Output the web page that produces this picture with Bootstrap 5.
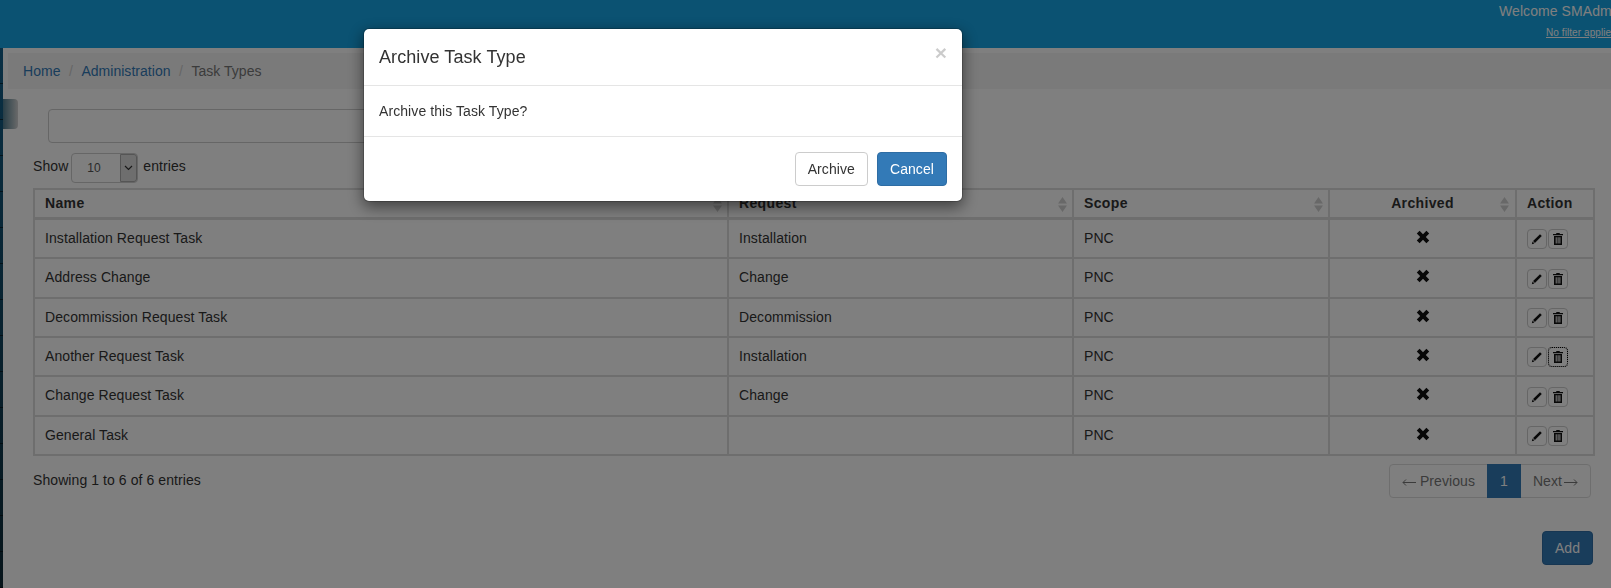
<!DOCTYPE html>
<html lang="en">
<head>
<meta charset="utf-8">
<title>Task Types</title>
<link rel="stylesheet" href="https://cdn.jsdelivr.net/npm/bootstrap@5.3.0/dist/css/bootstrap.min.css">
<style>
html,body{height:100%;overflow:hidden}
body{font-family:"Liberation Sans",Arial,sans-serif;font-size:14px;line-height:20px;color:#333;background:#fff;letter-spacing:.08px}
a{color:#337ab7;text-decoration:none}
.topbar{height:48px;background:#16a4e4;color:#fff;text-align:right;white-space:nowrap;overflow:hidden;padding-right:0}
.topinner{width:112px;margin-left:auto;text-align:left}
.welcome{font-size:14px;line-height:20px;padding-top:1px}
.filterlink{font-size:10px;color:#fff;text-decoration:underline;line-height:14px;display:block;margin-top:5px;margin-left:47px}
.shell{display:flex;height:540px}
.siderail{width:3px;flex:none;background:repeating-linear-gradient(to bottom,transparent 0 35px,rgba(0,0,0,.55) 35px 36px),linear-gradient(to bottom,#14608a,#0e2a36);position:relative}
.sidetab{position:absolute;left:3px;top:51px;width:15px;height:30px;border-radius:0 4px 4px 0;background:linear-gradient(to right,#507c8e,#d4d4d4)}
.pagewrap{flex:1;min-width:0;padding:5px 16px 0 5px}
.crumbs{margin:0 -16px 0 0;background:#f5f5f5;height:36px;padding:8px 15px;border-radius:0;letter-spacing:.03px}
.crumbs .breadcrumb-item+.breadcrumb-item::before{content:"/";color:#ccc;padding-right:8.5px}
.crumbs .breadcrumb-item+.breadcrumb-item{padding-left:8.5px}
.crumbs .breadcrumb-item.active{color:#777}
.searchbox{display:block;margin:20px 0 0 40px;width:560px;height:34px;border:1px solid #ccc;border-radius:4px;background:#fff}
.lenrow{display:flex;align-items:center;margin:10px 0 0 25px;height:30px}
.lenrow>span{padding-bottom:4px}
.lenselect{width:67px;height:30px;margin:0 5px 0 3px;border:1px solid #ccc;border-radius:4px;position:relative;font-size:12px;line-height:20px;padding:4px 0 0 15px;color:#555;background:#fff}
.lenarrow{position:absolute;top:0;right:0;width:17px;height:28px;background:#ddd;border:1px solid #aaa;border-radius:0 3px 3px 0;display:flex;align-items:center;justify-content:center}
.tasktbl{margin:5px 0 0 25px;width:1560px;table-layout:fixed;border-collapse:collapse;border:2px solid #ddd;color:#333}
.tasktbl th,.tasktbl td{border:2px solid #ddd;padding:0 10px;vertical-align:middle;background:#fff}
.tasktbl td{padding-bottom:2px}
.tasktbl tbody tr:first-child td{padding-bottom:1px}
.tasktbl td:last-child,.tasktbl tbody tr:first-child td:last-child{padding-bottom:0}
.tasktbl thead th{border-bottom-width:3px;height:29px;position:relative;letter-spacing:.35px}
.tasktbl tbody tr{height:39px}
.tasktbl tbody tr.rowtall{height:40px}
.sorter{position:absolute;right:5px;top:7px;width:9px;height:15px}
.cenx{text-align:center}
.cenx .sorter{right:6px}
.xmark{display:block;margin:0 auto 2px}
.iconbtn{display:inline-flex;align-items:center;justify-content:center;width:20px;height:20px;border:1px solid #ccc;border-radius:4px;background:#fff;padding:0;vertical-align:middle;margin-right:1px}
.focused{outline:1px dotted #000;outline-offset:-1px}
.infoline{display:flex;justify-content:space-between;margin:8px -1px 0 25px;width:1558px}
.infotext{padding-top:6px}
.pager{margin:0;--bs-pagination-color:#777;--bs-pagination-border-color:#ddd;--bs-pagination-padding-x:12px;--bs-pagination-padding-y:6px;--bs-pagination-font-size:14px;--bs-pagination-border-radius:4px;--bs-pagination-active-bg:#337ab7;--bs-pagination-active-border-color:#337ab7;--bs-pagination-disabled-color:#777;--bs-pagination-disabled-border-color:#ddd;--bs-pagination-disabled-bg:#fff}
.pagearrow{vertical-align:-1px}
.arrowafter{margin-left:2px}
.addrow{display:flex;justify-content:flex-end;margin-top:33px;width:1585px}
.addbtn{width:51px;height:34px;background:#337ab7;border:1px solid #2e6da4;color:#fff;font-size:14px;padding:0;border-radius:4px}
.dialogbox{width:600px;max-width:none;margin:28px 0 0 363px}
.dialogbox .modal-content{border:1px solid rgba(0,0,0,.2);border-radius:6px;box-shadow:0 5px 15px rgba(0,0,0,.5)}
.dialogbox .modal-header{padding:15px;border-bottom:1px solid #e5e5e5;height:57px;align-items:flex-start;justify-content:space-between}
.dialogbox .modal-title{font-size:18px;line-height:26px;font-weight:500;color:#333}
.xclose{font-size:21px;font-weight:700;line-height:21px;color:#000;opacity:.2;background:none;border:0;padding:0;margin-top:-2px}
.dialogbox .modal-body{padding:15px;height:50px}
.dialogbox .modal-footer{padding:15px;border-top:1px solid #e5e5e5;gap:9px;height:65px}
.dialogbox .modal-footer .btn{margin:0;height:34px;font-size:14px;line-height:20px;padding:6px 12px;border-radius:4px;letter-spacing:.08px}
.btn-archive{background:#fff;border:1px solid #ccc;color:#333}
.btn-cancel{background:#337ab7;border:1px solid #2e6da4;color:#fff}
.modal-backdrop.show{opacity:.5}
</style>
</head>
<body>
<svg width="0" height="0" class="d-none">
<symbol id="ipen" viewBox="0 0 12 12"><path d="M9 1.200l1.800 1.800-6.900 6.900-1.800-1.800zM1.600 8.600l1.800 1.800-2.600.8z" fill="#111"/></symbol>
<symbol id="itrash" viewBox="0 0 12 12"><path d="M4.500 0h3l.5 1h3v1.300H1V1h3zM2 3h8v9H2zM3.700 4.300v6.300h1V4.300zm1.900 0v6.300h1V4.300zm1.800 0v6.300h1V4.300z" fill="#111" fill-rule="evenodd"/></symbol>
<symbol id="ix" viewBox="0 0 14 14"><path d="M3.600 .8L7 4.200 10.400 .8 13.200 3.600 9.800 7l3.400 3.400-2.800 2.800L7 9.800l-3.400 3.400L.8 10.400 4.200 7 .8 3.600z" fill="#111"/></symbol>
<symbol id="isort" viewBox="0 0 9 15"><path d="M4.500 0L9 6.500H0zM4.500 15L0 8.500h9z" fill="#d0d0d0"/></symbol>
</svg>

<header class="topbar">
  <div class="topinner">
    <div class="welcome">Welcome SMAdmin</div>
    <a class="filterlink" href="#">No filter applied</a>
  </div>
</header>

<div class="shell">
  <div class="siderail"><div class="sidetab"></div></div>
  <main class="pagewrap">
    <nav aria-label="breadcrumb">
      <ol class="breadcrumb crumbs">
        <li class="breadcrumb-item"><a href="#">Home</a></li>
        <li class="breadcrumb-item"><a href="#">Administration</a></li>
        <li class="breadcrumb-item active">Task Types</li>
      </ol>
    </nav>
    <div class="searchbox"></div>
    <div class="lenrow">
      <span>Show</span>
      <div class="lenselect">10<span class="lenarrow"><svg width="9" height="6" viewBox="0 0 9 6"><path d="M1 1l3.500 3.500L8 1" fill="none" stroke="#333" stroke-width="1.200"/></svg></span></div>
      <span>entries</span>
    </div>
    <table class="tasktbl">
      <colgroup><col style="width:694px"><col style="width:345px"><col style="width:256px"><col style="width:187px"><col style="width:78px"></colgroup>
      <thead><tr>
        <th>Name<svg class="sorter"><use href="#isort"/></svg></th>
        <th>Request<svg class="sorter"><use href="#isort"/></svg></th>
        <th>Scope<svg class="sorter"><use href="#isort"/></svg></th>
        <th class="cenx">Archived<svg class="sorter"><use href="#isort"/></svg></th>
        <th>Action</th>
      </tr></thead>
      <tbody>
        <tr class="rowtall"><td>Installation Request Task</td><td>Installation</td><td>PNC</td><td class="cenx"><svg class="xmark" width="14" height="14"><use href="#ix"/></svg></td><td><button class="iconbtn"><svg width="12" height="12"><use href="#ipen"/></svg></button><button class="iconbtn"><svg width="12" height="12"><use href="#itrash"/></svg></button></td></tr>
        <tr class="rowtall"><td>Address Change</td><td>Change</td><td>PNC</td><td class="cenx"><svg class="xmark" width="14" height="14"><use href="#ix"/></svg></td><td><button class="iconbtn"><svg width="12" height="12"><use href="#ipen"/></svg></button><button class="iconbtn"><svg width="12" height="12"><use href="#itrash"/></svg></button></td></tr>
        <tr><td>Decommission Request Task</td><td>Decommission</td><td>PNC</td><td class="cenx"><svg class="xmark" width="14" height="14"><use href="#ix"/></svg></td><td><button class="iconbtn"><svg width="12" height="12"><use href="#ipen"/></svg></button><button class="iconbtn"><svg width="12" height="12"><use href="#itrash"/></svg></button></td></tr>
        <tr><td>Another Request Task</td><td>Installation</td><td>PNC</td><td class="cenx"><svg class="xmark" width="14" height="14"><use href="#ix"/></svg></td><td><button class="iconbtn"><svg width="12" height="12"><use href="#ipen"/></svg></button><button class="iconbtn focused"><svg width="12" height="12"><use href="#itrash"/></svg></button></td></tr>
        <tr class="rowtall"><td>Change Request Task</td><td>Change</td><td>PNC</td><td class="cenx"><svg class="xmark" width="14" height="14"><use href="#ix"/></svg></td><td><button class="iconbtn"><svg width="12" height="12"><use href="#ipen"/></svg></button><button class="iconbtn"><svg width="12" height="12"><use href="#itrash"/></svg></button></td></tr>
        <tr><td>General Task</td><td></td><td>PNC</td><td class="cenx"><svg class="xmark" width="14" height="14"><use href="#ix"/></svg></td><td><button class="iconbtn"><svg width="12" height="12"><use href="#ipen"/></svg></button><button class="iconbtn"><svg width="12" height="12"><use href="#itrash"/></svg></button></td></tr>
      </tbody>
    </table>
    <div class="infoline">
      <div class="infotext">Showing 1 to 6 of 6 entries</div>
      <ul class="pagination pager">
        <li class="page-item disabled"><a class="page-link" href="#"><svg class="pagearrow me-1" width="14" height="9" viewBox="0 0 14 9"><path d="M14 4.500H1M4 1.500L1 4.500l3 3" fill="none" stroke="currentColor"/></svg>Previous</a></li>
        <li class="page-item active"><a class="page-link" href="#">1</a></li>
        <li class="page-item disabled"><a class="page-link" href="#">Next<svg class="pagearrow arrowafter" width="14" height="9" viewBox="0 0 14 9"><path d="M0 4.500h13M10 1.500l3 3-3 3" fill="none" stroke="currentColor"/></svg></a></li>
      </ul>
    </div>
    <div class="addrow"><button class="btn addbtn">Add</button></div>
  </main>
</div>

<div class="modal-backdrop show"></div>
<div class="modal d-block" tabindex="-1">
  <div class="modal-dialog dialogbox">
    <div class="modal-content">
      <div class="modal-header">
        <h4 class="modal-title">Archive Task Type</h4>
        <button type="button" class="xclose">×</button>
      </div>
      <div class="modal-body">Archive this Task Type?</div>
      <div class="modal-footer">
        <button type="button" class="btn btn-archive">Archive</button>
        <button type="button" class="btn btn-cancel">Cancel</button>
      </div>
    </div>
  </div>
</div>
<script src="https://cdn.jsdelivr.net/npm/bootstrap@5.3.0/dist/js/bootstrap.bundle.min.js"></script>
</body>
</html>
